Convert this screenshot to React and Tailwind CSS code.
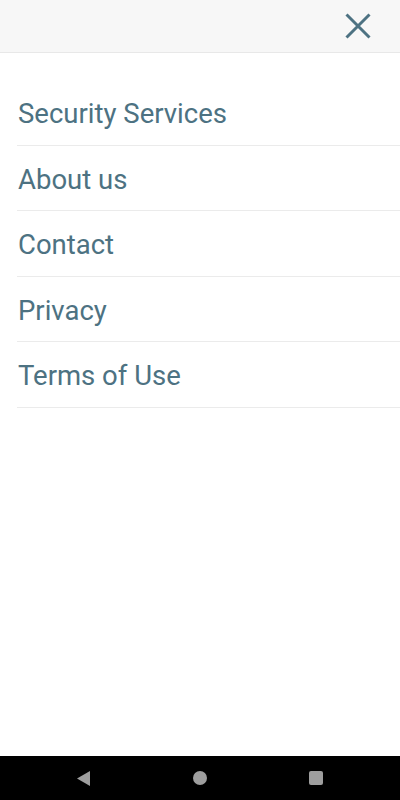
import React from 'react';

const items = ['Security Services', 'About us', 'Contact', 'Privacy', 'Terms of Use'];

export default function App() {
  return (
    <div className="flex h-[800px] w-[400px] flex-col bg-white font-['Roboto',sans-serif]">
      {/* top bar */}
      <header className="flex h-[53px] shrink-0 items-center justify-end border-b border-[#e8e8e8] bg-[#f7f7f7] pr-[29px]">
        <svg width="26" height="26" viewBox="0 0 26 26" className="text-[#4d7282]">
          <path d="M1.5 1.5L24.5 24.5M24.5 1.5L1.5 24.5" stroke="currentColor" strokeWidth="3" />
        </svg>
      </header>

      <nav className="flex-1 pl-[17px] pt-[27px]">
        {items.map((label) => (
          <a
            key={label}
            href="#"
            className="flex h-[65.5px] items-center border-b border-[#ebebeb] pt-[3px] text-[27.5px] leading-none text-[#4d7282]"
          >
            <span className="pl-px">{label}</span>
          </a>
        ))}
      </nav>

      {/* android nav bar */}
      <div className="flex h-[44px] shrink-0 items-center justify-between bg-black px-[77px]">
        <svg width="13" height="15" viewBox="0 0 13 15">
          <path d="M13 0L0 7.5L13 15z" fill="#9e9e9e" />
        </svg>
        <div className="h-[14px] w-[14px] rounded-full bg-[#9e9e9e]" />
        <div className="h-[14px] w-[14px] rounded-[2px] bg-[#9e9e9e]" />
      </div>
    </div>
  );
}
